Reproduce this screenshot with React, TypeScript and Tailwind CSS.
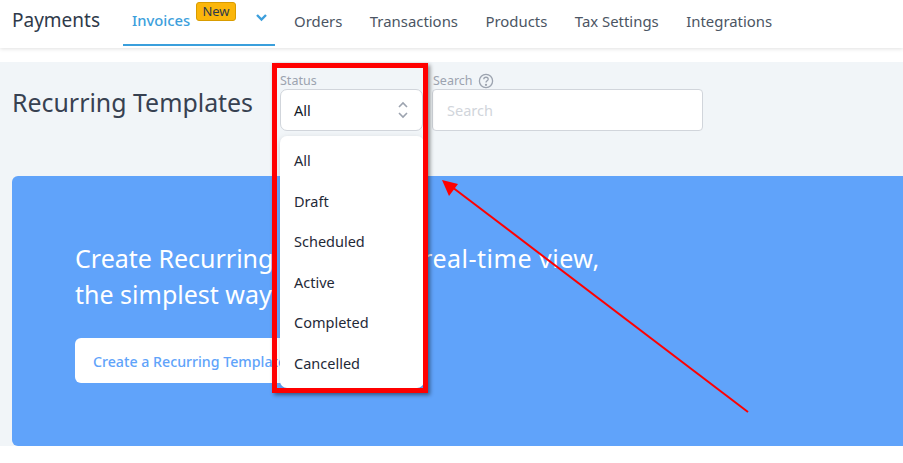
import React from "react";

const items = ["All", "Draft", "Scheduled", "Active", "Completed", "Cancelled"];
const nav = ["Orders", "Transactions", "Products", "Tax Settings", "Integrations"];

export default function App() {
  return (
    <div className="relative w-[903px] h-[463px] overflow-hidden bg-white font-['Noto_Sans','Open_Sans',sans-serif]">
      <header className="flex h-[48px] items-stretch bg-white shadow-[0_1px_4px_rgba(0,0,0,0.12)]">
        <div className="ml-[12px] mt-[6px] w-[111px] text-[19px] leading-[28px] text-[#2f3a4a]">Payments</div>
        <div className="relative flex h-[46px] w-[152px] border-b-2 border-[#3a9fdc] pl-[9px]">
          <span className="mt-[9px] text-[14.8px] leading-[22px] font-medium text-[#3d9fdc]">Invoices</span>
          <span className="absolute left-[73px] top-[2px] flex h-[19px] w-[40px] items-center justify-center rounded-[3px] border border-[#d99c00] bg-[#fbb60a] text-[13px] text-[#2f3a4a]">New</span>
          <svg className="absolute left-[132px] top-[13px]" width="13" height="9" viewBox="0 0 13 9" fill="none">
            <path d="M2 2 L6.5 6.5 L11 2" stroke="#3d9fdc" strokeWidth="2.4" />
          </svg>
        </div>
        <nav className="ml-[19px] flex gap-[27.5px] pt-[10px] text-[14.9px] leading-[22px] text-[#4b5563]">
          {nav.map((n) => (
            <span key={n}>{n}</span>
          ))}
        </nav>
      </header>

      <main className="mt-[14px] h-[384px] bg-[#f1f5f8] pl-[12px]">
        <div className="flex h-[114px]">
          <h1 className="mt-[23px] w-[268px] text-[24.9px] leading-[34px] text-[#374151]">Recurring Templates</h1>
          <div className="mt-[11px] w-[143px]">
            <div className="h-[16px] text-[12.5px] leading-[16px] text-[#9ca3af]">Status</div>
            <div className="relative flex h-[42px] items-center rounded-[7px] border border-[#d1d5db] bg-white pl-[13px] pt-[1px] text-[14.5px] text-[#111827]">
              All
              <svg className="absolute right-[13px] top-[10px]" width="12" height="20" viewBox="0 0 12 20" fill="none" stroke="#9ca3af" strokeWidth="1.6">
                <path d="M2 7 L6 3 L10 7" />
                <path d="M2 13 L6 17 L10 13" />
              </svg>
            </div>
          </div>
          <div className="ml-[9px] mt-[11px] w-[271px]">
            <div className="flex h-[16px] items-center gap-[5px] pl-[1px] text-[12.5px] leading-[16px] text-[#9ca3af]">
              Search
              <svg width="16" height="16" viewBox="0 0 16 16" fill="none" stroke="#9ca3af" strokeWidth="1.3">
                <circle cx="8" cy="8" r="6.6" />
                <path d="M5.8 6.2 C5.8 3.6 10.2 3.6 10.2 6.2 C10.2 7.9 8 7.8 8 9.6" />
                <circle cx="8" cy="11.8" r="0.5" fill="#9ca3af" />
              </svg>
            </div>
            <div className="flex h-[42px] items-center rounded-[4px] border border-[#d1d5db] bg-white pl-[14px] pt-[1px] text-[14.5px] text-[#d1d5db]">Search</div>
          </div>
        </div>

        <section className="h-[270px] rounded-l-[6px] bg-[#60a3fa] pl-[63px] pt-[64px]">
          <p className="text-[25px] leading-[36px] text-white whitespace-nowrap">
            Create Recurring Invoices in <span className="ml-[11px] tracking-[0.5px]">real-time view,</span>
            <br />
            the simplest way
          </p>
          <button className="mt-[26px] flex h-[45px] w-[230px] items-center whitespace-nowrap rounded-[6px] bg-white pl-[18px] pt-[2px] text-[14.2px] font-medium text-[#60a3fa]">
            Create a Recurring Template
          </button>
        </section>
      </main>

      <ul className="absolute left-[280px] top-[136px] w-[144px] h-[252px] rounded-[7px] bg-white pl-[14px] pt-[5px] text-[14.5px] text-[#1f2937] shadow-[0_2px_6px_rgba(0,0,0,0.15)]">
        {items.map((i) => (
          <li key={i} className="flex h-[40.5px] items-center">{i}</li>
        ))}
      </ul>

      <div className="pointer-events-none absolute left-[272px] top-[63px] h-[330px] w-[156px] border-[5px] border-[#ff0000] shadow-[2px_2px_4px_rgba(0,0,0,0.45)]" />

      <svg className="pointer-events-none absolute left-0 top-0" width="903" height="463" fill="none">
        <line x1="748" y1="412" x2="452" y2="187" stroke="#ff0000" strokeWidth="2" />
        <polygon points="442,180 458,184 449,196" fill="#ff0000" />
      </svg>
    </div>
  );
}
